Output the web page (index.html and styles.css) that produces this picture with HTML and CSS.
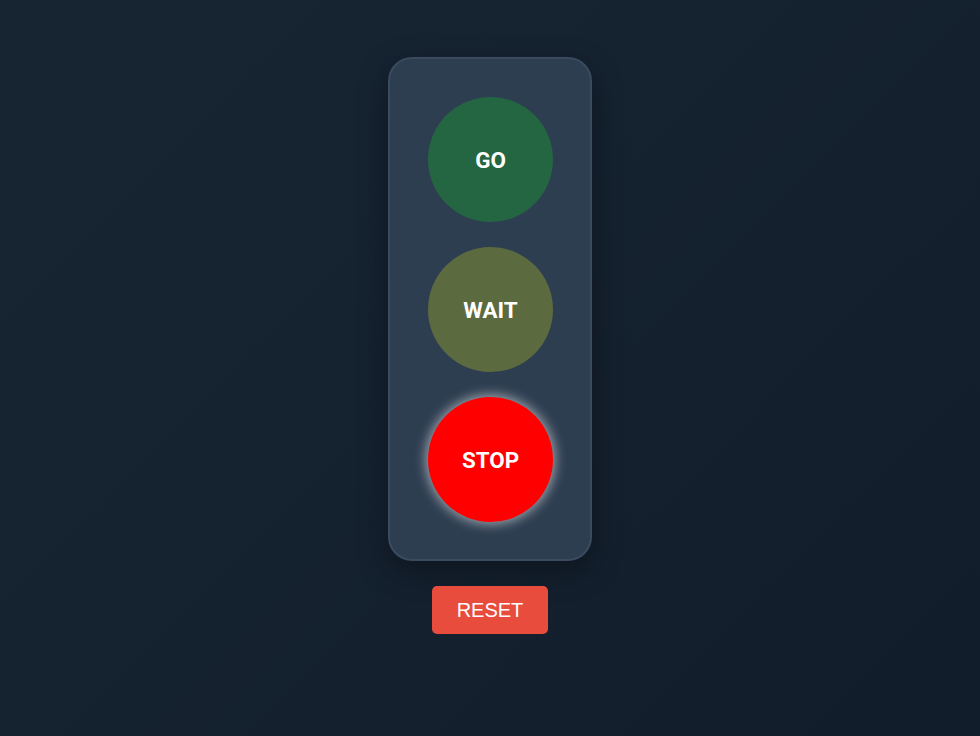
FILE: index.html
```html
<!DOCTYPE html>
<html lang="en">
<head>
<meta charset="utf-8">
<title>Traffic Light</title>
<link rel="stylesheet" href="styles.css">
</head>
<body>
<main class="app">
  <div class="housing">
    <div class="light light-go">GO</div>
    <div class="light light-wait">WAIT</div>
    <div class="light light-stop">STOP</div>
  </div>
  <button class="reset">RESET</button>
</main>
</body>
</html>
```

FILE: styles.css
```css
html, body {
  margin: 0;
  height: 100%;
}
body {
  background: linear-gradient(135deg, #172533 0%, #121d2b 100%);
  font-family: Roboto, "Liberation Sans", Arial, sans-serif;
}
.app {
  display: flex;
  flex-direction: column;
  align-items: center;
  padding-top: 57px;
}
.housing {
  box-sizing: border-box;
  width: 204px;
  padding: 38px 38px 37px;
  display: flex;
  flex-direction: column;
  gap: 25px;
  background: #2e3e51;
  border: 2px solid #3a4b60;
  border-radius: 24px;
  box-shadow: 0 10px 30px rgba(0, 0, 0, 0.35);
}
.light {
  width: 125px;
  height: 125px;
  border-radius: 50%;
  display: flex;
  align-items: center;
  justify-content: center;
  color: #fff;
  font-weight: 700;
  font-size: 22.4px;
}
.light-go { background: #246642; }
.light-wait { background: #5c6a40; }
.light-stop {
  background: #ff0000;
  box-shadow: 0 0 12px 2px rgba(255, 255, 255, 0.55);
}
.reset {
  margin-top: 25px;
  width: 116px;
  height: 48px;
  border: none;
  border-radius: 5px;
  background: #e74c3c;
  color: #fff;
  font-family: "Liberation Sans", Arial, sans-serif;
  font-size: 20px;
  cursor: pointer;
}
```
